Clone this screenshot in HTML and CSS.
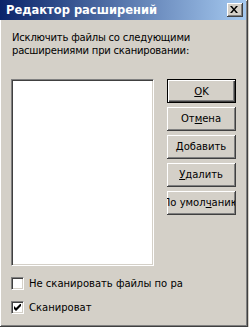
FILE: index.html
```html
<!DOCTYPE html>
<html lang="ru">
<head>
  <meta charset="UTF-8">
  <title>Редактор расширений</title>
  <link rel="stylesheet" href="styles.css">
</head>
<body>

<div class="window">
  <div class="titlebar">
    <span class="title">Редактор расширений</span>
    <span class="close">
      <svg width="8" height="7" viewBox="0 0 8 7">
        <path d="M0 0h2l2 2.5 2-2.5h2l-3 3.5 3 3.5h-2l-2-2.5-2 2.5h-2l3-3.5z" fill="#000"/>
      </svg>
    </span>
  </div>

  <div class="content">
    <p class="label">Исключить файлы со следующими<br>расширениями при сканировании:</p>

    <div class="row">
      <div class="listbox"></div>
      <div class="buttons">
        <div class="btn default"><span><u>O</u>K</span></div>
        <div class="btn"><span>От<u>м</u>ена</span></div>
        <div class="btn"><span><u>Д</u>обавить</span></div>
        <div class="btn"><span><u>У</u>далить</span></div>
        <div class="btn"><span>По умол<u>ч</u>анию</span></div>
      </div>
    </div>

    <div class="check first">
      <span class="box"></span>
      <span class="check-text">Не сканировать файлы по ра</span>
    </div>
    <div class="check">
      <span class="box">
        <svg width="7" height="7" viewBox="0 0 7 7">
          <path d="M0 2v3l2 2 5-5v-3l-5 5z" fill="#000"/>
        </svg>
      </span>
      <span class="check-text">Сканироват</span>
    </div>
  </div>
</div>

</body>
</html>
```

FILE: styles.css
```css
body {
  margin: 0;
  background: #d4d0c8;
  font-family: "DejaVu Sans", Tahoma, sans-serif;
  font-size: 10px;
  color: #000;
}

.window {
  width: 248px;
  height: 327px;
  box-sizing: border-box;
  background: #d4d0c8;
  border-right: 1px solid #404040;
  border-bottom: 1px solid #404040;
  box-shadow: inset 1px 1px 0 #fff, inset -1px -1px 0 #808080;
  display: flex;
  flex-direction: column;
}

.titlebar {
  height: 20px;
  margin: 0 1px 0 0;
  background: linear-gradient(to right, #0a246a, #a6caf0);
  display: flex;
  align-items: center;
  padding: 0 3px 0 6px;
}

.title {
  flex: 1;
  color: #fff;
  font-weight: bold;
  font-size: 11.5px;
}

.close {
  width: 16px;
  height: 14px;
  box-sizing: border-box;
  background: #d4d0c8;
  border-right: 1px solid #404040;
  border-bottom: 1px solid #404040;
  box-shadow: inset 1px 1px 0 #fff, inset -1px -1px 0 #808080;
  display: flex;
  align-items: center;
  justify-content: center;
  padding: 0 1px 1px 0;
}

.close svg {
  display: block;
}

.content {
  padding: 11px 0 0 11px;
}

.label {
  margin: 0 0 0 1px;
  line-height: 13px;
  letter-spacing: -0.2px;
}

.row {
  display: flex;
  margin-top: 22px;
}

.listbox {
  width: 143px;
  height: 187px;
  box-sizing: border-box;
  background: #fff;
  border-top: 1px solid #808080;
  border-left: 1px solid #808080;
  border-right: 1px solid #fff;
  border-bottom: 1px solid #fff;
  box-shadow: inset 1px 1px 0 #404040, inset -1px -1px 0 #d4d0c8;
}

.buttons {
  margin-left: 13px;
  display: flex;
  flex-direction: column;
  gap: 4px;
}

.btn {
  width: 69px;
  height: 24px;
  box-sizing: border-box;
  border-right: 1px solid #404040;
  border-bottom: 1px solid #404040;
  box-shadow: inset 1px 1px 0 #fff, inset -1px -1px 0 #808080;
  display: flex;
  align-items: center;
  justify-content: center;
  overflow: hidden;
  white-space: nowrap;
}

.btn.default {
  border: 1px solid #000;
  box-shadow: inset 1px 1px 0 #fff, inset -1px -1px 0 #404040, inset -2px -2px 0 #808080;
}

.check {
  display: flex;
  align-items: center;
  margin-top: 11px;
}

.box {
  width: 13px;
  height: 13px;
  box-sizing: border-box;
  background: #fff;
  border-top: 1px solid #808080;
  border-left: 1px solid #808080;
  border-right: 1px solid #fff;
  border-bottom: 1px solid #fff;
  box-shadow: inset 1px 1px 0 #404040, inset -1px -1px 0 #d4d0c8;
  display: flex;
  align-items: center;
  justify-content: center;
}

.box svg {
  display: block;
}

.check-text {
  margin-left: 5px;
  white-space: nowrap;
}
```
